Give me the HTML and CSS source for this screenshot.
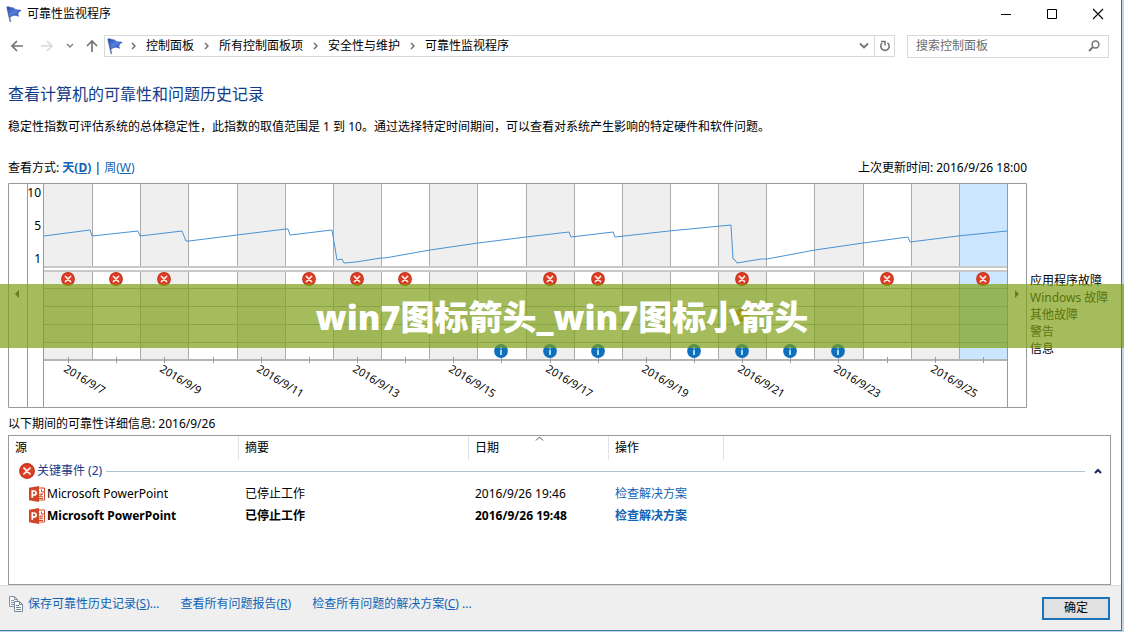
FILE: index.html
```html
<!DOCTYPE html>
<html lang="zh-CN">
<head>
<meta charset="utf-8">
<title>可靠性监视程序</title>
<link rel="stylesheet" href="styles.css">
</head>
<body>
<svg class="defs" width="0" height="0" aria-hidden="true">
  <defs>
    <linearGradient id="flagFill" x1="0" y1="0" x2="1" y2="1">
      <stop offset="0" stop-color="#2447b4"/><stop offset=".5" stop-color="#5580dc"/><stop offset="1" stop-color="#2440a4"/>
    </linearGradient>
    <symbol id="flag" viewBox="0 0 16 16">
      <path d="M1.200 1.500 4.300 15.300" stroke="#7484a0" stroke-width="1.600" stroke-linecap="round"/>
      <path d="M1.300.8C3 .2 4.500 2 6.500 1.700c1-.2 1.500 1 2.500 1.500 2 1 4 .6 6.200 1.100-2 .8-2.600 1.800-3.400 3.700.2 1 .3 1.500.9 2.200-2-.6-3.700-1.200-5.200-.7-1.500.3-2.500.9-3.900 1.800z" fill="url(#flagFill)" stroke="#2c4cae" stroke-width=".6"/>
    </symbol>
    <symbol id="error" viewBox="0 0 14 14">
      <circle cx="7" cy="7" r="6.900" fill="#c52d19"/><circle cx="7" cy="7" r="6" fill="#da3e27"/>
      <path d="m4.400 4.400 5.200 5.200m0-5.200L4.400 9.600" stroke="#ffe9e2" stroke-width="1.600" stroke-linecap="round"/>
    </symbol>
    <symbol id="info" viewBox="0 0 14 14">
      <circle cx="7" cy="7" r="6.900" fill="#0f6fbd"/>
      <path d="M7 3v1.600M7 5.800V11" stroke="#b8f4ff" stroke-width="1.700"/>
    </symbol>
    <symbol id="warning" viewBox="0 0 14 14">
      <circle cx="7" cy="7" r="6.800" fill="#e07818"/>
      <path d="m4.400 4.400 5.200 5.200m0-5.200L4.400 9.600" stroke="#ffd060" stroke-width="1.700"/>
    </symbol>
    <symbol id="ppt" viewBox="0 0 16 16">
      <path d="M9 2h6.500v12H9z" fill="#fff" stroke="#d04727"/>
      <path d="M12.500 3.500V6H15M10.500 5a2.300 2.300 0 1 0 3.300 3H11M10 10.700h4M10 12.500h4" fill="none" stroke="#d04727"/>
      <path d="M0 1.800 10 0v16L0 14.200z" fill="#d04727"/>
      <path d="M3.300 11.800V5h1.900a1.900 1.900 0 0 1 0 3.900H3.300" fill="none" stroke="#fff" stroke-width="1.700"/>
    </symbol>
    <symbol id="crumb" viewBox="0 0 6 8"><path d="m1 1 3 3-3 3" fill="none" stroke="#6a6a6a" stroke-width="1.400"/></symbol>
  </defs>
</svg>

<div class="window">
  <header class="titlebar">
    <svg class="icon16"><use href="#flag"/></svg>
    <span class="caption">可靠性监视程序</span>
    <button class="winbtn" aria-label="最小化"><svg width="12" height="12"><path d="M1 6.500h10" stroke="#000"/></svg></button>
    <button class="winbtn" aria-label="最大化"><svg width="12" height="12"><path d="M1.500 1.500h9v9h-9z" fill="none" stroke="#000"/></svg></button>
    <button class="winbtn" aria-label="关闭"><svg width="12" height="12"><path d="m1 1 10 10m0-10L1 11" stroke="#000" stroke-width="1.100"/></svg></button>
  </header>

  <nav class="navbar">
    <button class="nav" aria-label="后退"><svg width="14" height="12"><path d="M13 6H2m5-5L2 6l5 5" fill="none" stroke="#747474" stroke-width="1.700"/></svg></button>
    <button class="nav next" aria-label="前进"><svg width="14" height="12"><path d="M1 6h11M7 1l5 5-5 5" fill="none" stroke="#d8d8d8" stroke-width="1.500"/></svg></button>
    <button class="nav recent" aria-label="最近位置"><svg width="8" height="6"><path d="m1 1 3 3 3-3" fill="none" stroke="#858585" stroke-width="1.500"/></svg></button>
    <button class="nav" aria-label="向上"><svg width="12" height="14"><path d="M6 13V2M1 7l5-5 5 5" fill="none" stroke="#747474" stroke-width="1.700"/></svg></button>
    <div class="address">
      <svg class="icon16"><use href="#flag"/></svg>
      <svg class="crumb first"><use href="#crumb"/></svg><a href="#">控制面板</a>
      <svg class="crumb"><use href="#crumb"/></svg><a href="#">所有控制面板项</a>
      <svg class="crumb"><use href="#crumb"/></svg><a href="#">安全性与维护</a>
      <svg class="crumb"><use href="#crumb"/></svg><a href="#">可靠性监视程序</a>
      <button class="drop" aria-label="展开"><svg width="10" height="8"><path d="m1 1.500 4 4 4-4" fill="none" stroke="#747474" stroke-width="1.800"/></svg></button>
      <button class="refresh" aria-label="刷新"><svg width="12" height="12"><path d="M8.500 2.800A4.200 4.200 0 1 1 3.200 3" fill="none" stroke="#747474" stroke-width="1.600"/><path d="M2 1.500h4v4" fill="none" stroke="#747474" stroke-width="1.500"/></svg></button>
    </div>
    <form class="search">
      <input type="text" placeholder="搜索控制面板" aria-label="搜索控制面板">
      <svg width="12" height="12"><circle cx="7.500" cy="4.500" r="3.400" fill="none" stroke="#747474" stroke-width="1.500"/><path d="M5 7 1 11" stroke="#747474" stroke-width="1.900"/></svg>
    </form>
  </nav>

  <main class="content">
    <h1>查看计算机的可靠性和问题历史记录</h1>
    <p class="intro">稳定性指数可评估系统的总体稳定性，此指数的取值范围是 1 到 10。通过选择特定时间期间，可以查看对系统产生影响的特定硬件和软件问题。</p>
    <div class="viewrow">
      <span>查看方式: <a href="#"><b>天(<u>D</u>)</b></a> | <a href="#">周(<u>W</u>)</a></span>
      <span>上次更新时间: 2016/9/26 18:00</span>
    </div>
    <div class="report">
      <svg class="chart" id="chart" viewBox="0 0 1019 225" role="img" aria-label="稳定性图表"></svg>
      <ul class="legend">
        <li>应用程序故障</li><li>Windows 故障</li><li>其他故障</li><li>警告</li><li>信息</li>
      </ul>
    </div>
    <p class="period">以下期间的可靠性详细信息: 2016/9/26</p>
    <div class="details">
      <table>
        <colgroup><col class="c-source"><col class="c-summary"><col class="c-date"><col class="c-action"><col></colgroup>
        <thead>
          <tr><th>源</th><th>摘要</th><th class="sorted">日期<svg class="sort" width="9" height="5"><path d="m1 4.500 3.500-3.500L8 4.500" fill="none" stroke="#555"/></svg></th><th>操作</th><th></th></tr>
        </thead>
        <tbody>
          <tr class="group"><td colspan="5"><div class="grouphead">
            <svg class="icon16"><use href="#error"/></svg><span>关键事件 (2)</span><i class="rule"></i>
            <button aria-label="折叠"><svg width="8" height="6"><path d="m1 5 3-3 3 3" fill="none" stroke="#14285a" stroke-width="2"/></svg></button>
          </div></td></tr>
          <tr><td><span class="app"><svg class="icon16"><use href="#ppt"/></svg>Microsoft PowerPoint</span></td><td>已停止工作</td><td>2016/9/26 19:46</td><td><a href="#">检查解决方案</a></td><td></td></tr>
          <tr class="unread"><td><span class="app"><svg class="icon16"><use href="#ppt"/></svg>Microsoft PowerPoint</span></td><td>已停止工作</td><td>2016/9/26 19:48</td><td><a href="#">检查解决方案</a></td><td></td></tr>
        </tbody>
      </table>
    </div>
  </main>

  <footer class="footer">
    <svg width="16" height="16"><path d="M1.500.5h5l3 3v7h-8zM6.500.5v3h3M3 4.500h3M3 6.500h5M3 8.500h5" fill="#f7f7f7" stroke="#8493a2"/><path d="M6.500 5.500h5l3 3v7h-8zM11.500 5.500v3h3M8 9.500h3M8 11.500h5M8 13.500h5" fill="#fff" stroke="#75889a"/></svg>
    <a href="#">保存可靠性历史记录(<u>S</u>)...</a>
    <a href="#">查看所有问题报告(<u>R</u>)</a>
    <a href="#">检查所有问题的解决方案(<u>C</u>) ...</a>
    <button class="ok">确定</button>
  </footer>
</div>
<div class="banner">win7图标箭头_win7图标小箭头</div>
<script src="chart.js"></script>
</body>
</html>
```
FILE: styles.css
```css
* { box-sizing: border-box; }
body {
  margin: 0;
  background: #c3d4e4;
  color: #000;
  font: 12px/16px "Noto Sans", "Noto Sans CJK SC", sans-serif;
}
button { padding: 0; border: 0; background: none; font: inherit; display: flex; align-items: center; justify-content: center; }
a { color: #0f63b5; text-decoration: none; }
svg { display: block; flex: none; }
.defs { position: absolute; }
.icon16 { width: 16px; height: 16px; }

.window {
  display: flex;
  flex-direction: column;
  min-height: calc(100vh - 1px);
  margin-right: 2px;
  background: #fff;
  border-right: 1px solid #2f7896;
  border-bottom: 1px solid #3a7ba8;
}
.titlebar { display: flex; align-items: center; height: 27px; padding-left: 6px; }
.caption { flex: 1; margin-left: 5px; }
.winbtn { width: 46px; height: 27px; }

.navbar { display: flex; align-items: center; height: 38px; padding: 0 12px 0 8px; }
.nav { width: 18px; height: 22px; }
.next { margin-left: 12px; }
.recent { width: 28px; }
.nav:nth-child(4) { width: 16px; }
.address { display: flex; align-items: center; flex: 1; height: 22px; margin: 0 12px 0 4px; padding-left: 2px; border: 1px solid #d9d9d9; }
.address a { color: #000; }
.crumb { width: 6px; height: 8px; margin: 0 9px 0 10px; }
.crumb.first { margin-left: 8px; }
.drop { width: 20px; height: 20px; margin-left: auto; }
.refresh { width: 20px; height: 20px; border-left: 1px solid #d9d9d9; }
.search { display: flex; align-items: center; width: 202px; height: 23px; padding: 0 8px; border: 1px solid #d9d9d9; }
.search input { flex: 1; min-width: 0; padding: 0; border: 0; outline: 0; font: inherit; }
.search input::placeholder { color: #6d6d6d; opacity: 1; }

.content { display: flex; flex-direction: column; flex: 1; padding: 18px 10px 0 8px; }
h1 { margin: 0; color: #113c88; font-size: 16px; line-height: 22px; font-weight: 400; }
.intro { margin: 14px 0 25px; }
.viewrow { display: flex; justify-content: space-between; padding: 0 84px 7px 0; }
.report { display: flex; }
.chart { flex: 1; min-width: 0; }
.legend { width: 84px; margin: 0; padding: 89px 0 0 3px; list-style: none; line-height: 17px; white-space: nowrap; }
.period { margin: 8px 0 3px; }
.details { flex: 1; min-height: 150px; border: 1px solid #999; }
table { width: 100%; border-collapse: separate; border-spacing: 0; table-layout: fixed; }
.c-source, .c-summary { width: 230px; }
.c-date { width: 140px; }
.c-action { width: 115px; }
th { height: 24px; padding: 0 6px; border-right: 1px solid #e2e2e2; font-weight: 400; text-align: left; }
th:last-child { border-right: 0; }
.sorted { position: relative; }
.sort { position: absolute; top: 0; left: 66px; }
td { height: 22px; padding: 1px 6px 0; }
.group td { height: 22px; padding: 0 8px 0 10px; }
.grouphead { display: flex; align-items: center; gap: 2px; color: #15398a; }
.rule { flex: 1; height: 1px; margin: 0 7px 0 2px; background: #b4c3ce; }
.app { display: flex; align-items: center; gap: 2px; padding-left: 14px; }
.unread { font-weight: 700; }

.footer { display: flex; align-items: center; height: 45px; padding: 0 11px 0 8px; background: #efefef; border-top: 1px solid #d8d8d8; }
.footer a { margin: 0 17px 8px 4px; }
.footer > svg { margin-bottom: 8px; }
.ok { width: 68px; height: 23px; margin-left: auto; background: #e1e1e1; border: 2px solid #1874bd; }

.axis { stroke: #9a9a9a; fill: none; }
.grid { stroke: #ababab; fill: none; }
.rowline { stroke: #c8c8c8; stroke-width: 2; }
.day { fill: #efefef; }
.today { fill: #cce6ff; }
.index { fill: none; stroke: #4a92d4; }
.scale { font-size: 12px; text-anchor: end; }
.date { font-size: 11px; }

.banner {
  position: absolute;
  top: 284px;
  left: 0;
  right: 0;
  height: 64px;
  background: rgba(125, 159, 21, .7);
  color: #fff;
  font-size: 34px;
  font-weight: 900;
  line-height: 66px;
  text-align: center;
}
```
FILE: chart.js
```javascript
const left = 36, step = 48.15, days = 20;
const x = n => Math.round(left + n * step);
const parts = [];
for (let i = 0; i < days; i++) {
  if (i % 2 === 0 || i === days - 1) {
    const kind = i === days - 1 ? 'today' : 'day';
    parts.push(`<rect class="${kind}" x="${x(i)}" y="1" width="${x(i + 1) - x(i)}" height="83"/>`);
    parts.push(`<rect class="${kind}" x="${x(i)}" y="89" width="${x(i + 1) - x(i)}" height="87"/>`);
  }
}
for (let i = 1; i < days; i++) {
  parts.push(`<path class="grid" d="M${x(i) + .5} 1v83m0 5v87"/>`);
}
parts.push('<path class="rowline" d="M36 84h963M36 88h963"/>');
parts.push('<path class="grid" d="M36 105.500h963m-963 18h963m-963 18h963m-963 18h963"/>');
parts.push('<path d="M36 177h963" stroke="#b4b4b4" stroke-width="2"/>');
parts.push('<path class="axis" d="M.5.5h1018v224H.5zM19.500 0v225M35.500 0v225M999.500 0v225"/>');
parts.push('<path d="M11 107v8l-4-4zM1007 107v8l4-4z" fill="#333"/>');
[[10, 14], [5, 47], [1, 80]].forEach(([v, y]) => {
  parts.push(`<text class="scale" x="33" y="${y}">${v}</text>`);
});
const index = [[36, 53], [82, 47], [84, 53], [130, 48], [132, 53], [174, 48], [178, 58], [181, 58], [229, 52], [278, 46], [280, 46], [282, 52], [324, 47], [329, 77], [334, 76], [336, 80], [348, 79], [373, 75], [377, 75], [422, 67], [470, 60], [518, 54], [561, 49], [563, 54], [605, 49], [607, 54], [661, 48], [723, 42], [725, 76], [727, 77], [729, 80], [753, 76], [759, 76], [807, 67], [855, 60], [900, 54], [902, 59], [950, 53], [999, 48]];
parts.push(`<polyline class="index" points="${index.map(p => p.join()).join(' ')}"/>`);
for (let i = 0; i < days; i++) {
  parts.push(`<path class="axis" d="M${x(i + .5) + .5} 174v6"/>`);
}
const mark = (kind, list, y) => list.forEach(i => {
  parts.push(`<use href="#${kind}" x="${x(i + .5) - 7}" y="${y}" width="14" height="14"/>`);
});
mark('error', [0, 1, 2, 5, 6, 7, 10, 11, 14, 17, 19], 89);
mark('warning', [14], 125);
mark('info', [9, 10, 11, 13, 14, 15, 16], 161);
for (let i = 0; i < days; i += 2) {
  parts.push(`<text class="date" transform="translate(${x(i + .5) - 5} 188) rotate(31)">2016/9/${i + 7}</text>`);
}
document.getElementById('chart').innerHTML = parts.join('');
```
